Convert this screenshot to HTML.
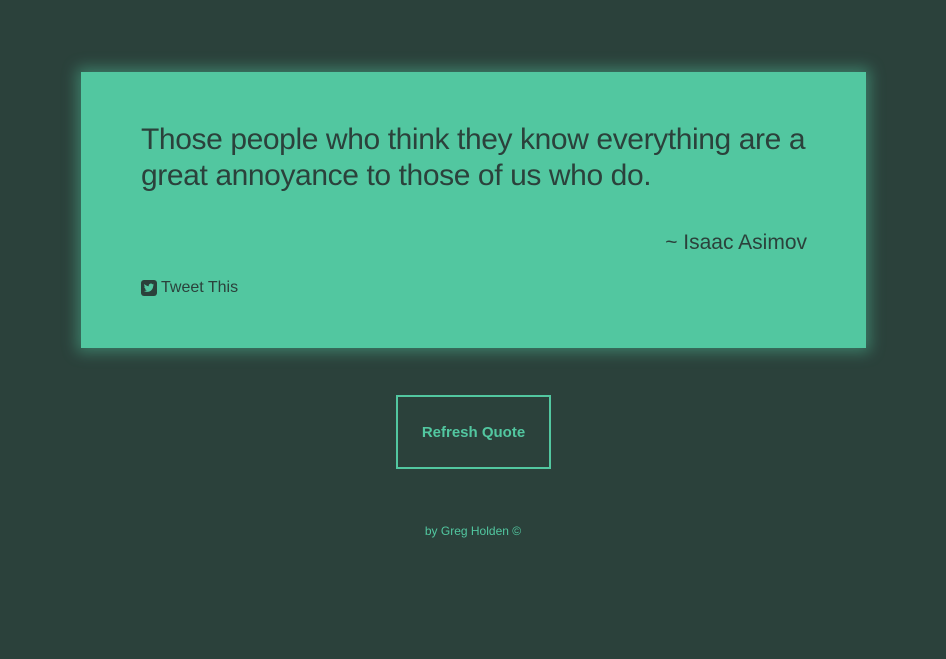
<!DOCTYPE html>
<html><head><meta charset="utf-8"><style>
html,body{margin:0;padding:0;background:#2b413b;width:946px;height:659px;overflow:hidden;font-family:"Liberation Sans",sans-serif;}
.card{position:absolute;left:81px;top:72px;width:785px;height:276px;background:#52c7a0;box-shadow:0 0 14px 4px rgba(82,199,160,0.45);}
.q{position:absolute;left:60px;top:50px;width:700px;font-size:30px;line-height:36px;color:#2b413b;letter-spacing:-0.4px;}
.a{position:absolute;right:59px;top:159px;font-size:21px;color:#2b413b;}
.t{position:absolute;left:60px;top:207px;font-size:16px;color:#2b413b;display:flex;align-items:center;}
.t svg{margin-right:4px}
.btn{position:absolute;left:396px;top:395px;width:151px;height:70px;border:2px solid #52c7a0;color:#52c7a0;font-weight:bold;font-size:15px;display:flex;align-items:center;justify-content:center;}
.f{position:absolute;left:0;width:946px;top:524px;text-align:center;color:#52c7a0;font-size:12px;}
</style></head><body>
<div class="card">
<div class="q">Those people who think they know everything are a great annoyance to those of us who do.</div>
<div class="a">~ Isaac Asimov</div>
<div class="t"><svg width="16" height="16" viewBox="0 0 16 16"><rect x="0" y="0" width="16" height="16" rx="3" fill="#2b413b"/><path d="M13 4.6c-.4.2-.8.3-1.2.3.4-.3.8-.7.9-1.1-.4.2-.9.4-1.3.5a2.1 2.1 0 0 0-3.6 1.9C6 6.1 4.5 5.3 3.5 4c-.6 1-.2 2.2.6 2.8-.3 0-.6-.1-.9-.3 0 1 .7 1.9 1.7 2.1-.3.1-.6.1-1 0 .3.9 1.1 1.5 2 1.5A4.2 4.2 0 0 1 3 11c1 .6 2 .9 3.2.9 3.9 0 6-3.2 6-6v-.3c.3-.3.6-.6.8-1z" fill="#52c7a0"/></svg>Tweet This</div>
</div>
<div class="btn">Refresh Quote</div>
<div class="f">by Greg Holden ©</div>
</body></html>
